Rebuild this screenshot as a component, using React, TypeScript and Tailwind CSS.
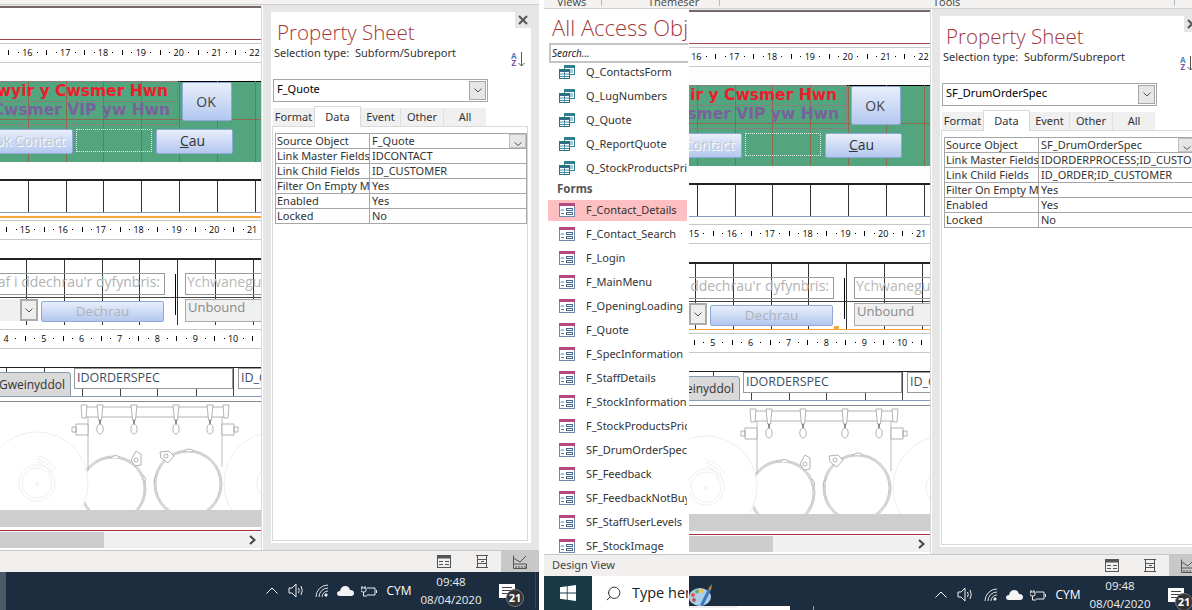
import { Search } from "lucide-react";

const GRID_TOP = [28, 66, 103, 141, 179, 217, 255];
const GRID_LOW = [26, 64, 102, 139, 177, 215, 253];

const QUERIES = ["Q_ContactsForm", "Q_LugNumbers", "Q_Quote", "Q_ReportQuote", "Q_StockProductsPrice"];
const FORMS = [
  "F_Contact_Details",
  "F_Contact_Search",
  "F_Login",
  "F_MainMenu",
  "F_OpeningLoading",
  "F_Quote",
  "F_SpecInformation",
  "F_StaffDetails",
  "F_StockInformation",
  "F_StockProductsPrice",
  "SF_DrumOrderSpec",
  "SF_Feedback",
  "SF_FeedbackNotBuy",
  "SF_StaffUserLevels",
  "SF_StockImage",
];

function Ruler({ first, x0 }: { first: number; x0: number }) {
  const step = 37.85;
  return (
    <div className="relative h-[20px] overflow-hidden border-y border-[#c8c8c8] bg-white">
      {Array.from({ length: 8 }, (_, i) => {
        const x = x0 + i * step;
        return (
          <div key={i}>
            <span
              className="absolute top-0 w-[20px] -translate-x-1/2 text-center font-['Open_Sans',sans-serif] text-[9px] leading-[17px] text-black"
              style={{ left: x }}
            >
              {first + i}
            </span>
            <span className="absolute top-[8px] h-px w-px bg-black" style={{ left: x + step / 4 }} />
            <span className="absolute top-[6px] h-[5px] w-px bg-black" style={{ left: x + step / 2 }} />
            <span className="absolute top-[8px] h-px w-px bg-black" style={{ left: x + (step * 3) / 4 }} />
          </div>
        );
      })}
    </div>
  );
}

function BlueButton({ className, children }: { className: string; children: React.ReactNode }) {
  return (
    <div
      className={`absolute flex items-center justify-center rounded-[2px] border border-[#8ea8d8] bg-gradient-to-b from-[#e9effb] to-[#b3c7ef] font-['Open_Sans',sans-serif] ${className}`}
    >
      {children}
    </div>
  );
}

function GreenHeader() {
  return (
    <div className="relative h-[81px] bg-[#53a57f]">
      <div className="absolute left-0 top-0 h-px w-[178px] bg-[#8f7f7f]" />
      <div className="absolute left-[178px] right-0 top-0 h-px bg-black" />
      {GRID_TOP.map((x) => (
        <div key={x} className="absolute bottom-0 top-0 w-px bg-[#8c6b4d]" style={{ left: x }} />
      ))}
      <div className="absolute left-0 right-0 top-[38px] h-px bg-[#8c6b4d]" />
      <div className="absolute left-0 top-0 h-[44px] w-[178px] border-b border-r border-[#84807c]" />
      <div className="absolute left-0 top-[20px] h-px w-[178px] bg-[#84807c]" />
      <div className="absolute right-[93px] top-[1px] whitespace-nowrap font-['DejaVu_Sans',sans-serif] text-[15.5px] font-bold leading-[18px] text-[#ee1c2b]">
        Gwyir y Cwsmer Hwn
      </div>
      <div className="absolute right-[91px] top-[20px] whitespace-nowrap font-['DejaVu_Sans',sans-serif] text-[15.5px] font-bold leading-[18px] text-[#7a619b]">
        Y Cwsmer VIP yw Hwn
      </div>
      <BlueButton className="left-[182px] top-[1px] h-[39px] w-[50px] pr-[2px] text-[14px] text-[#444]">OK</BlueButton>
      <BlueButton className="-left-[30px] top-[48px] h-[25px] w-[103px] pb-[2px] text-[14px] text-[#c4c8d0] [text-shadow:1px_1px_0_#fff]">
        Book Contact
      </BlueButton>
      <div className="absolute left-[76px] top-[48px] h-[23px] w-[76px] border border-dotted border-[#e8f2ec]" />
      <BlueButton className="left-[156px] top-[48px] h-[25px] w-[77px] pb-[2px] pr-[4px] text-[14px] text-[#333]">
        <span>
          <span className="underline">C</span>au
        </span>
      </BlueButton>
    </div>
  );
}

function PlainGrid({ xs, height }: { xs: number[]; height: number }) {
  return (
    <div className="relative border-t-2 border-[#222] bg-white" style={{ height }}>
      {xs.map((x) => (
        <div key={x} className="absolute bottom-0 top-0 w-px bg-[#333]" style={{ left: x }} />
      ))}
    </div>
  );
}

function StartSection({ selected }: { selected: boolean }) {
  return (
    <div className="relative h-[67px] border-t-2 border-[#222] bg-white font-['Open_Sans',sans-serif]">
      {GRID_LOW.map((x) => (
        <div key={x} className="absolute bottom-0 top-0 w-px bg-[#333]" style={{ left: x }} />
      ))}
      <div className="absolute left-0 right-0 top-[37px] h-px bg-[#444]" />
      <div className="absolute -left-[100px] top-[13px] h-[22px] w-[265px] overflow-hidden whitespace-nowrap border border-[#999] pr-[4px] text-right text-[14px] leading-[15px] text-[#b2b2b2]">
        Cyntaf i ddechrau'r dyfynbris:
      </div>
      <div className="absolute left-0 top-[39px] h-[22px] w-[38px] bg-[#f0f0f0]" />
      <div className="absolute left-[20px] top-[39px] flex h-[22px] w-[18px] items-center justify-center border-2 border-[#aaa] bg-[#eee]">
        <svg width="8" height="5" viewBox="0 0 8 5" fill="none" stroke="#555" strokeWidth="1">
          <path d="M0.5 0.5 L4 4 L7.5 0.5" />
        </svg>
      </div>
      <BlueButton className="left-[41px] top-[41px] h-[21px] w-[123px] pb-[1px] text-[13.5px] text-[#aeb2b8]">Dechrau</BlueButton>
      <div className="absolute left-[175px] top-[14px] h-[41px] w-px bg-black" />
      <div className="absolute left-[185px] top-[13px] h-[22px] w-[90px] overflow-hidden border border-[#999] pl-[1px] text-[14px] leading-[15px] text-[#b8b8b8]">
        Ychwanegu
      </div>
      <div className="absolute left-[185px] top-[39px] h-[23px] w-[90px] border border-[#aaa] bg-[#f0f0f0] pl-[2px] text-[13px] leading-[15px] text-[#8a8a8a]">
        Unbound
      </div>
      {selected && <div className="absolute left-[165px] top-[62px] h-[4px] w-[5px] bg-[#f5a63c]" />}
    </div>
  );
}

function TabRow() {
  return (
    <div className="relative h-[29px] border-t border-[#222] bg-white font-['Open_Sans',sans-serif]">
      {[6, 44, 82, 120, 157, 196, 233].map((x) => (
        <div key={x} className="absolute bottom-0 top-0 w-px bg-[#444]" style={{ left: x }} />
      ))}
      <div className="absolute -left-[1px] top-[4px] flex h-[25px] w-[72px] items-center justify-end rounded-tr-[3px] border border-[#8a9ab0] bg-[#d9d9d9] pr-[5px] text-[12px] text-[#333]">
        Gweinyddol
      </div>
      <div className="absolute left-[74px] top-[0px] h-[21px] w-[159px] border border-[#999] bg-white pl-[2px] text-[12.5px] leading-[18px] text-[#3b4f66]">
        IDORDERSPEC
      </div>
      <div className="absolute left-[238px] top-[0px] h-[21px] w-[40px] border border-[#999] bg-white pl-[2px] text-[12.5px] leading-[18px] text-[#3b4f66]">
        ID_CUST
      </div>
    </div>
  );
}

function DrumDrawing() {
  const lugs = [100, 134, 176, 210];
  return (
    <svg width="261" height="108" viewBox="0 402 261 108" className="block bg-white">
      <path d="M88 417 V470 M222 417 V467" fill="none" stroke="#aaa" strokeWidth="0.8" />
      <g fill="none" stroke="#a8a8a8" strokeWidth="0.6">
        <circle cx="113" cy="489" r="33" />
        <circle cx="113" cy="489" r="32" />
        <circle cx="113" cy="489" r="31" />
        <circle cx="188" cy="484" r="34" />
        <circle cx="188" cy="484" r="33" />
        <circle cx="188" cy="484" r="32" />
      </g>
      <g fill="#fff" stroke="#efefef" strokeWidth="1">
        <circle cx="37" cy="483" r="51" />
        <circle cx="37" cy="483" r="18" fill="none" />
        <circle cx="37" cy="483" r="15" fill="none" />
        <circle cx="37" cy="484" r="1.5" fill="none" />
        <path
          d="M37 456 A26 26 0 0 1 56 470 M37 459 A24 24 0 0 1 53 472 M37 462 A20 20 0 0 1 50 474"
          fill="none"
        />
        <circle cx="275" cy="483" r="51" />
        <circle cx="275" cy="483" r="18" fill="none" />
      </g>
      <g fill="#fff" stroke="#a0a0a0" strokeWidth="0.8">
        <path d="M84 407 H226 V417 H84 Z" />
        <path d="M81 405 H87 L86 418 H82 Z" />
        <path d="M223 405 H229 L228 418 H224 Z" />
        <path d="M76 424 H88 V435 H76 Z M72 427 H76 V432 H72 Z" />
        <path d="M222 424 H234 V435 H222 Z M234 427 H238 V432 H234 Z" />
        {lugs.map((x) => (
          <g key={x}>
            <path d={`M${x - 3} 405 H${x + 3} L${x + 1.5} 420 H${x - 1.5} Z`} />
            <path d={`M${x} 420 V424`} stroke="#444" strokeWidth="1.2" />
            <ellipse cx={x} cy="429" rx="3.2" ry="5" />
          </g>
        ))}
        <path d="M131 460 L136 451 L141 454 L141 465 L135 466 Z" />
        <circle cx="136" cy="460" r="2" />
        <path d="M169 451 L160 452 L161 458 L168 463 L174 456 Z" />
        <circle cx="166" cy="456" r="2" />
        <path d="M111 458 Q116 453 120 458" />
        <path d="M184 451 Q189 447 194 451" />
        <path d="M143 475 Q147 478 145 482" />
        <path d="M156 476 Q153 479 155 483" />
      </g>
    </svg>
  );
}

function DesignSurface({ clip, selected }: { clip: number; selected: boolean }) {
  return (
    <div className="h-[545px] shrink-0 overflow-hidden" style={{ width: 261 - clip }}>
      <div className="w-[261px]" style={{ marginLeft: -clip }}>
        <div className="h-px bg-[#e8e8e8]" />
        <div className="h-[2px] bg-[#77686a]" />
        <div className="h-[31px] bg-white" />
        <div className="h-px bg-[#a04a4d]" />
        <div className="h-[3px] bg-white" />
        <Ruler first={15} x0={27.3 - 37.85} />
        <div className="h-[18px] bg-[#fdfdfd]" />
        <GreenHeader />
        <div className="h-[17px] bg-[#fdfdfd]" />
        <PlainGrid xs={GRID_TOP} height={33} />
        <div className="h-px bg-[#7f9bbd]" />
        <div className="h-[3px] bg-white" />
        <div className={`h-[2px] ${selected ? "bg-white" : "bg-[#f5a63c]"}`} />
        <div className="h-[2px] bg-white" />
        <Ruler first={14} x0={25 - 37.85} />
        <div className="h-[18px] bg-white" />
        <StartSection selected={selected} />
        <div className={`h-px ${selected ? "bg-[#f5a63c]" : "bg-white"}`} />
        <div className="h-[3px] bg-white" />
        <Ruler first={3} x0={6 - 37.85} />
        <div className="h-[18px] bg-white" />
        <TabRow />
        <div className="h-px bg-[#7f9bbd]" />
        <div className="h-[4px] bg-white" />
        <div className="h-px bg-[#888]" />
        <DrumDrawing />
        <div className="h-[17px] bg-[#cecece]" />
        <div className="h-[3px] bg-white" />
        <div className="h-px bg-[#a83236]" />
        <div className="h-px bg-white" />
        <div className="flex h-[16px] items-center justify-between bg-[#f0f0f0] pr-[5px]">
          <div className="h-full w-[104px] bg-[#cdcdcd]" />
          <svg width="7" height="10" viewBox="0 0 7 10" fill="none" stroke="#444" strokeWidth="2">
            <path d="M1 1 L5.5 5 L1 9" />
          </svg>
        </div>
        <div className="h-[2px] bg-white" />
      </div>
    </div>
  );
}

function SortIcon() {
  return (
    <div className="absolute left-[240px] top-[39px] flex h-[16px] items-center font-['Open_Sans',sans-serif] text-[8px] font-bold leading-[7px]">
      <div className="flex flex-col items-center">
        <span className="text-[#3f7fc0]">A</span>
        <span className="text-[#7a4fa8]">Z</span>
      </div>
      <svg width="7" height="15" viewBox="0 0 7 15" fill="none" stroke="#555" strokeWidth="1" className="ml-[1px]">
        <path d="M3.5 0 V14 M0.5 11 L3.5 14 L6.5 11" />
      </svg>
    </div>
  );
}

function PropertySheet({ name, rows }: { name: string; rows: [string, string][] }) {
  return (
    <div className="relative h-[545px] w-[276px] shrink-0 bg-[#e6e6e6] pl-[8px] pt-[7px] font-['Noto_Sans',sans-serif] text-[#333]">
      <div className="relative flex h-[531px] w-[260px] flex-col bg-white">
        <div className="absolute right-0 top-0 flex h-[16px] w-[16px] items-center justify-center bg-[#e6e6e6]">
          <svg width="10" height="10" viewBox="0 0 10 10" stroke="#555" strokeWidth="2">
            <path d="M1 1 L9 9 M9 1 L1 9" />
          </svg>
        </div>
        <div className="mt-[6px] h-[28px] pl-[6px] font-['Open_Sans',sans-serif] text-[20.5px] font-light leading-[28px] text-[#a4373a]">
          Property Sheet
        </div>
        <div className="h-[14px] whitespace-pre pl-[3px] text-[11px] leading-[14px]">Selection type:  Subform/Subreport</div>
        <SortIcon />
        <div className="relative ml-[2px] mt-[19px] flex h-[23px] w-[215px] items-center border border-[#a6a6a6] pb-[2px] pl-[3px] text-[11px] text-black">
          {name}
          <div className="absolute right-[1px] top-[1px] flex h-[19px] w-[17px] items-center justify-center border border-[#a6a6a6] bg-[#e6e6e6]">
            <svg width="8" height="5" viewBox="0 0 8 5" fill="none" stroke="#555">
              <path d="M0.5 0.5 L4 4 L7.5 0.5" />
            </svg>
          </div>
        </div>
        <div className="ml-[2px] mt-[4px] flex h-[20px] items-end text-[11px]">
          <div className="flex h-[18px] w-[41px] items-center justify-center bg-[#f0f0f0]">Format</div>
          <div className="z-10 -mb-px flex h-[21px] w-[47px] items-center justify-center border-x border-t border-[#d9d9d9] bg-white">
            Data
          </div>
          <div className="flex h-[18px] w-[40px] items-center justify-center border-r border-[#e0e0e0] bg-[#f0f0f0]">Event</div>
          <div className="flex h-[18px] w-[43px] items-center justify-center border-r border-[#e0e0e0] bg-[#f0f0f0]">Other</div>
          <div className="flex h-[18px] w-[42px] items-center justify-center bg-[#f0f0f0]">All</div>
        </div>
        <div className="ml-[1px] h-[415px] w-[256px] border border-[#d9d9d9] pl-[2px] pt-[6px]">
          <div className="w-[252px] border-x border-t border-[#a6a6a6] text-[11px]">
            {rows.map(([label, value], i) => (
              <div key={label} className="relative flex h-[15px] border-b border-[#a6a6a6] leading-[14px]">
                <div className="w-[94px] shrink-0 overflow-hidden whitespace-nowrap border-r border-[#a6a6a6] pl-[1px]">{label}</div>
                <div className="overflow-hidden whitespace-nowrap pl-[2px]">{value}</div>
                {i === 0 && (
                  <div className="absolute right-0 top-0 flex h-[14px] w-[17px] items-end justify-center border border-[#c0c0c0] bg-[#e6e6e6] pb-[1px]">
                    <svg width="8" height="4" viewBox="0 0 8 4" fill="none" stroke="#555">
                      <path d="M0.5 0.5 L4 3.5 L7.5 0.5" />
                    </svg>
                  </div>
                )}
              </div>
            ))}
          </div>
        </div>
      </div>
    </div>
  );
}

function QueryIcon() {
  return (
    <svg width="16" height="14" viewBox="0 0 16 14" className="shrink-0">
      <rect x="5.5" y="0.5" width="10" height="9" fill="#fff" stroke="#2f7f8f" />
      <rect x="5" y="0" width="11" height="3" fill="#2f7f8f" />
      <path d="M8 5 H14 M8 7 H14" stroke="#4a8fb0" />
      <rect x="0.5" y="4.5" width="10" height="9" fill="#fff" stroke="#2f6f80" />
      <rect x="0" y="4" width="11" height="3" fill="#2f6f80" />
      <path d="M1 9 H10 M1 11.5 H10 M5.5 7 V13" stroke="#4a8fb0" />
    </svg>
  );
}

function FormIcon() {
  return (
    <svg width="16" height="14" viewBox="0 0 16 14" className="shrink-0">
      <rect x="0.5" y="0.5" width="15" height="13" fill="#fff" stroke="#6f86a8" />
      <rect x="0" y="0" width="16" height="3" fill="#b5487f" />
      <path d="M2 7 H5" stroke="#4a7fb0" />
      <rect x="7.5" y="5.5" width="6" height="2" fill="#fff" stroke="#4a6f90" />
      <rect x="7.5" y="9.5" width="6" height="2" fill="#fff" stroke="#4a6f90" />
      <path d="M2 10.5 H5" stroke="#4a7fb0" />
    </svg>
  );
}

function NavRow({ label, query, active }: { label: string; query?: boolean; active?: boolean }) {
  return (
    <div className="flex h-[24px] shrink-0 items-center">
      <div className={`ml-[4px] flex h-[21px] w-[139px] items-center overflow-hidden whitespace-nowrap pl-[11px] ${active ? "bg-[#fdbfc2]" : ""}`}>
        <div className="flex w-[27px] shrink-0 items-center">{query ? <QueryIcon /> : <FormIcon />}</div>
        {label}
      </div>
    </div>
  );
}

function NavPane() {
  return (
    <div className="h-[545px] w-[144px] shrink-0 overflow-hidden bg-white font-['Noto_Sans',sans-serif] text-[11px] text-[#333]">
      <div className="mt-[3px] h-[31px] overflow-hidden whitespace-nowrap pl-[8px] font-['Open_Sans',sans-serif] text-[22px] font-light leading-[30px] text-[#a4373a]">
        All Access Objects
      </div>
      <div className="relative z-10 ml-[5px] h-[20px] border-2 border-r-0 border-[#c4c4c4] bg-white pl-[1px] text-[10px] italic leading-[16px] text-[#222]">
        Search...
      </div>
      <div className="-mt-[3px]">
        {QUERIES.map((q) => (
          <NavRow key={q} label={q} query />
        ))}
        <div className="h-[18px] pl-[13px] text-[11.5px] font-bold leading-[18px] text-[#555]">Forms</div>
        {FORMS.map((f, i) => (
          <NavRow key={f} label={f} active={i === 0} />
        ))}
      </div>
    </div>
  );
}

function StatusIcons({ className }: { className: string }) {
  return (
    <div className={`flex h-full w-[102px] shrink-0 items-center ${className}`}>
      <svg width="14" height="13" viewBox="0 0 14 13" fill="none" stroke="#555">
        <rect x="0.5" y="0.5" width="13" height="12" />
        <rect x="0" y="0" width="14" height="3" fill="#555" />
        <path d="M2 6.5 H6 M8 6.5 H12 M2 9.5 H6 M8 9.5 H12" />
      </svg>
      <svg width="12" height="13" viewBox="0 0 12 13" fill="none" stroke="#555" className="ml-[25px]">
        <path d="M0 0.5 H12 M0 12.5 H12 M1.5 0.5 V12.5 M10.5 0.5 V12.5 M1.5 4.5 H10.5 M1.5 8.5 H10.5 M5 6.5 H8" />
      </svg>
      <div className="ml-[13px] flex h-full w-[38px] items-center justify-center bg-[#c8c8c8]">
        <svg width="14" height="14" viewBox="0 0 14 14" fill="none" stroke="#555">
          <path d="M0.5 0.5 V9 H13.5 V13.5 H0.5 V9 M0.5 3 L7 7 L13 1 M3 11 V13 M6 11 V13 M9 11 V13 M12 11 V13" />
        </svg>
      </div>
    </div>
  );
}

function Tray({ className }: { className: string }) {
  return (
    <div className={`flex h-[38px] w-[274px] shrink-0 items-center pb-[1px] font-['Open_Sans',sans-serif] text-white ${className}`}>
      <svg width="12" height="7" viewBox="0 0 12 7" fill="none" stroke="#fff" className="ml-[1px]">
        <path d="M0.5 6.5 L6 1 L11.5 6.5" />
      </svg>
      <svg width="16" height="15" viewBox="0 0 16 15" fill="none" stroke="#eee" className="ml-[10px]">
        <path d="M1 5 H4 L8 1 V14 L4 10 H1 Z M10.5 5 Q12 7.5 10.5 10 M13 3 Q15.5 7.5 13 12" />
      </svg>
      <svg width="14" height="13" viewBox="0 0 14 13" fill="none" stroke="#ddd" className="ml-[11px]">
        <path d="M1 13 A12 12 0 0 1 13 1 M4 13 A9 9 0 0 1 13 4 M7 13 A6 6 0 0 1 13 7" />
        <circle cx="11" cy="11" r="1.2" fill="#fff" />
      </svg>
      <svg width="17" height="11" viewBox="0 0 17 11" fill="#f4f4f4" className="ml-[8px]">
        <path d="M3 11 Q0 11 0 8.5 Q0 6 3 6 Q4 1 8.5 1 Q12 1 13 5 Q17 5 17 8 Q17 11 14 11 Z" />
      </svg>
      <svg width="16" height="12" viewBox="0 0 16 12" fill="none" stroke="#eee" className="ml-[7px]">
        <path d="M1 1 V3 M4 1 V3 M0 3 H5 V6 Q5 7 2.5 7 Q0 7 0 6 Z M2.5 7 V11 H6 M6 3 H14 V10 H6 M15.5 5 V8" />
      </svg>
      <span className="ml-[9px] w-[26px] text-center text-[12px]">CYM</span>
      <div className="ml-[10px] flex w-[58px] flex-col items-center text-[11.5px] leading-[18px] text-[#eee]">
        <span>09:48</span>
        <span>08/04/2020</span>
      </div>
      <div className="relative ml-[19px] mt-[12px] h-[14px] w-[16px] self-start bg-white">
        <div className="absolute left-[3px] top-[3px] h-px w-[10px] bg-[#444]" />
        <div className="absolute left-[3px] top-[6px] h-px w-[10px] bg-[#444]" />
        <div className="absolute left-[3px] top-[9px] h-px w-[7px] bg-[#444]" />
        <div className="absolute left-[7px] top-[5px] flex h-[18px] w-[18px] items-center justify-center rounded-full border border-[#777] bg-[#333] text-[11px] font-bold text-white">
          21
        </div>
      </div>
      <div className="ml-auto mr-[3px] h-full w-px bg-[#33465c]" />
    </div>
  );
}

function PaintIcon() {
  return (
    <svg width="24" height="28" viewBox="0 0 24 28" className="shrink-0">
      <ellipse cx="11" cy="18" rx="11" ry="9" fill="#a9cdea" />
      <circle cx="4" cy="16" r="2" fill="#e0544c" />
      <circle cx="8" cy="12.5" r="2" fill="#6ab04c" />
      <circle cx="13" cy="12" r="2" fill="#f5c33b" />
      <circle cx="5" cy="21" r="2" fill="#c0584f" />
      <path d="M11 26 L19 10 L22 11 L14 27 Z" fill="#3d79b8" />
      <path d="M19 10 L23 5 L22 11 Z" fill="#c98a3f" />
    </svg>
  );
}

const LEFT_ROWS: [string, string][] = [
  ["Source Object", "F_Quote"],
  ["Link Master Fields", "IDCONTACT"],
  ["Link Child Fields", "ID_CUSTOMER"],
  ["Filter On Empty Master", "Yes"],
  ["Enabled", "Yes"],
  ["Locked", "No"],
];
const RIGHT_ROWS: [string, string][] = [
  ["Source Object", "SF_DrumOrderSpec"],
  ["Link Master Fields", "IDORDERPROCESS;ID_CUSTOMER"],
  ["Link Child Fields", "ID_ORDER;ID_CUSTOMER"],
  ["Filter On Empty Master", "Yes"],
  ["Enabled", "Yes"],
  ["Locked", "No"],
];

export default function App() {
  return (
    <div className="flex h-[610px] w-[1192px] overflow-hidden bg-white font-['Noto_Sans',sans-serif]">
      {/* first screenshot */}
      <div className="flex w-[539px] shrink-0 flex-col">
        <div className="h-[5px] border-b border-[#d0d0d0] bg-[#f3f2f1]" />
        <div className="flex">
          <DesignSurface clip={0} selected={false} />
          <div className="w-[2px] shrink-0 border-l border-[#d8d8d8] bg-white" />
          <PropertySheet name="F_Quote" rows={LEFT_ROWS} />
        </div>
        <div className="flex h-[22px] justify-end border-t border-[#c8c8c8] bg-[#f1f0ef]">
          <StatusIcons className="" />
        </div>
        <div className="flex h-[38px] justify-end bg-[#1c2d40]">
          <div className="mr-auto w-[6px] bg-[#4a5a66]" />
          <Tray className="" />
        </div>
      </div>
      <div className="w-[5px] shrink-0 bg-white" />

      {/* second screenshot with nav pane */}
      <div className="flex min-w-0 flex-1 flex-col overflow-hidden">
        <div className="relative h-[9px] overflow-hidden border-b border-[#d0d0d0] bg-[#f3f2f1] font-['Open_Sans',sans-serif] text-[11px] leading-[3px] text-[#444]">
          <span className="absolute left-[13px] top-0">Views</span>
          <span className="absolute left-[57px] top-0 h-[6px] w-px bg-[#bbb]" />
          <span className="absolute left-[104px] top-0">Themeser</span>
          <span className="absolute left-[175px] top-0 h-[6px] w-px bg-[#bbb]" />
          <span className="absolute left-[389px] top-0">Tools</span>
          <span className="absolute left-[630px] top-0 h-[6px] w-px bg-[#bbb]" />
        </div>
        <div className="flex">
          <NavPane />
          <div className="w-px shrink-0 bg-white" />
          <DesignSurface clip={20} selected />
          <div className="w-[2px] shrink-0 border-l border-[#d8d8d8] bg-white" />
          <PropertySheet name="SF_DrumOrderSpec" rows={RIGHT_ROWS} />
        </div>
        <div className="flex h-[22px] justify-between overflow-hidden border-t border-[#c8c8c8] bg-[#f1f0ef]">
          <span className="ml-[8px] text-[11px] leading-[20px] text-[#444]">Design View</span>
          <StatusIcons className="-mr-[15px]" />
        </div>
        <div className="relative flex h-[34px] items-start overflow-hidden bg-[#1c2d40]">
          <div className="flex h-full w-[48px] shrink-0 items-center justify-center bg-[#1b3a47]">
            <svg width="16" height="16" viewBox="0 0 16 16" fill="#fff">
              <path d="M0 2.3 L6.8 1.3 V7.6 H0 Z M7.6 1.2 L16 0 V7.6 H7.6 Z M0 8.4 H6.8 V14.7 L0 13.7 Z M7.6 8.4 H16 V16 L7.6 14.8 Z" />
            </svg>
          </div>
          <div className="flex h-full w-[96px] shrink-0 items-center overflow-hidden whitespace-nowrap bg-white pl-[13px] font-['Open_Sans',sans-serif] text-[14.5px] text-[#222]">
            <Search size={17} strokeWidth={1.3} className="mr-[10px] shrink-0 -scale-x-100" />
            Type here to search
          </div>
          <div className="h-full w-px shrink-0 bg-white" />
          <div className="mt-[3px] w-[24px] shrink-0">
            <PaintIcon />
          </div>
          <div className="flex-1" />
          <Tray className="-mr-[16px]" />
          <div className="absolute bottom-0 left-[144px] h-[4px] w-[102px] bg-white">
            <div className="h-[2px] w-[49px] bg-[#eee]" />
          </div>
          <div className="absolute bottom-0 left-[269px] h-[4px] w-px bg-[#d98b3a]" />
        </div>
      </div>
    </div>
  );
}
